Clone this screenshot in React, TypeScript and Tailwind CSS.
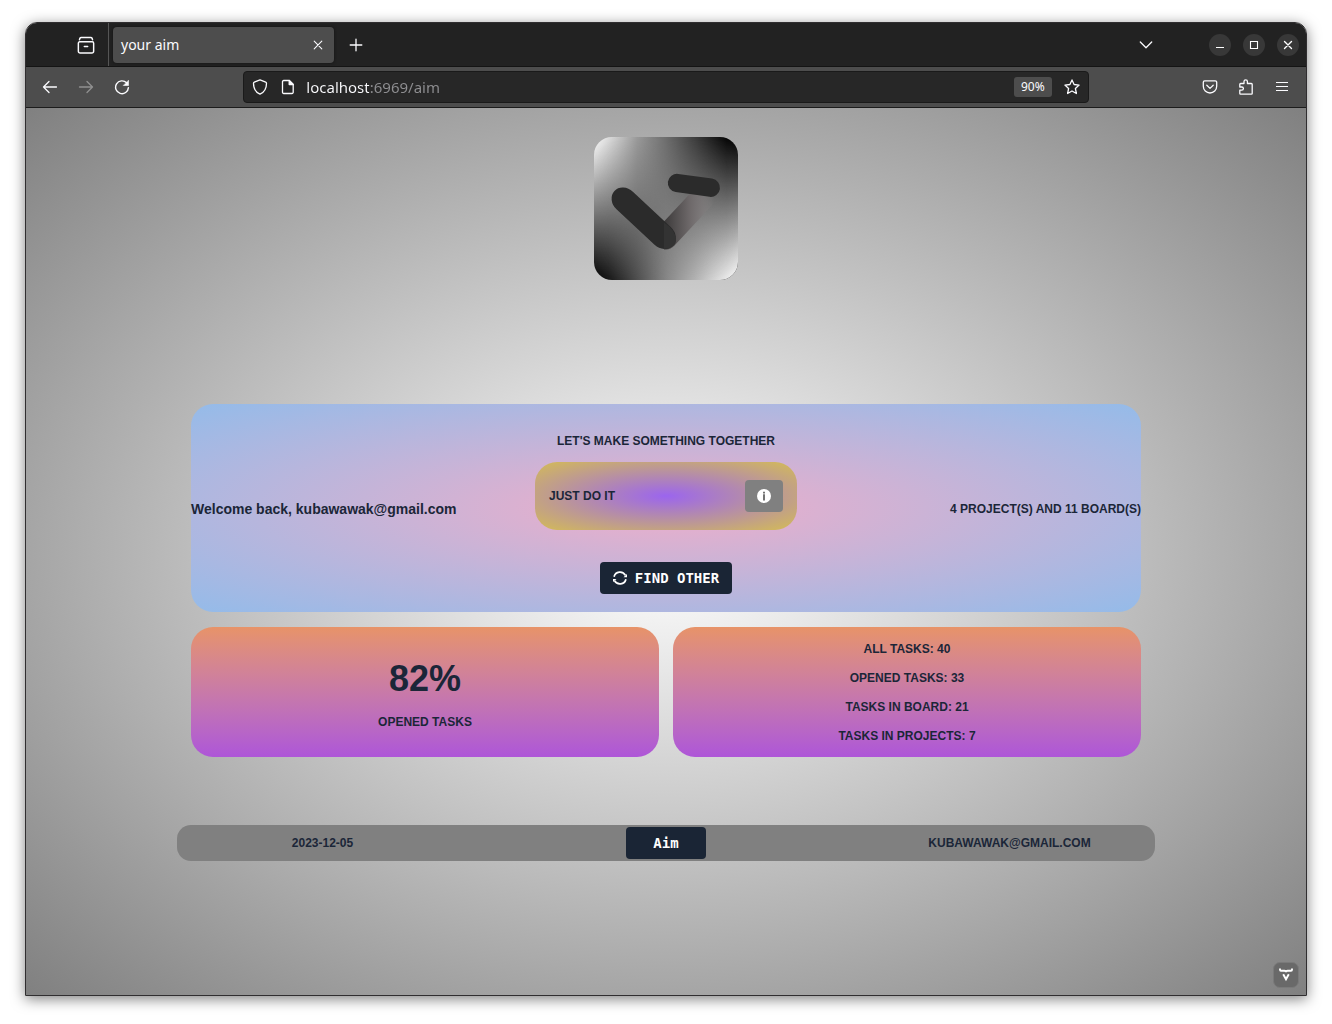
import React from "react";

type IconProps = { children: React.ReactNode; className?: string };

function Icon({ children, className = "size-4" }: IconProps) {
  return (
    <svg
      viewBox="0 0 16 16"
      className={className}
      fill="none"
      stroke="currentColor"
      strokeWidth="1.3"
      strokeLinecap="round"
      strokeLinejoin="round"
      aria-hidden="true"
    >
      {children}
    </svg>
  );
}

function ToolButton({
  label,
  children,
  disabled = false,
}: {
  label: string;
  children: React.ReactNode;
  disabled?: boolean;
}) {
  return (
    <button
      type="button"
      aria-label={label}
      disabled={disabled}
      className="flex size-9 items-center justify-center text-[#fbfbfe] disabled:text-[#909090]"
    >
      {children}
    </button>
  );
}

function WindowButton({ label, children }: { label: string; children: React.ReactNode }) {
  return (
    <button
      type="button"
      aria-label={label}
      className="flex size-[22px] items-center justify-center rounded-full bg-[#383838] text-white"
    >
      {children}
    </button>
  );
}

function TabBar() {
  return (
    <div className="flex h-11 items-center border-b border-[#141414] bg-[#222222] pr-[7px]">
      <div className="flex h-full w-[83px] items-center justify-end border-r border-[#555555] pr-1">
        <ToolButton label="Firefox View">
          <Icon className="size-[18px]">
            <path d="M3.500 1.300h9M2.200 3.300Q2.400 1.300 3.700 1.300M13.800 3.300Q13.600 1.300 12.300 1.300" />
            <path d="M2.400 5.200h11.200a1.200 1.200 0 0 1 1.200 1.200v7.200a1.500 1.500 0 0 1-1.500 1.500H2.700a1.500 1.500 0 0 1-1.500-1.500V6.400a1.200 1.200 0 0 1 1.200-1.200zM6.500 9.300h3" />
          </Icon>
        </ToolButton>
      </div>
      <div className="ml-1 flex h-9 w-[221px] items-center justify-between rounded bg-[#4d4d4d] pr-2 pl-2 shadow-[0_0_3px_#111]">
        <span className="text-[14px] text-[#fbfbfe]">your aim</span>
        <button type="button" aria-label="Close tab" className="flex size-4 items-center justify-center text-[#fbfbfe]">
          <Icon>
            <path d="M4.200 4.200l7.600 7.600M11.800 4.200l-7.600 7.600" strokeWidth="1.1" />
          </Icon>
        </button>
      </div>
      <div className="ml-1">
        <ToolButton label="New tab">
          <Icon>
            <path d="M8 2.200v11.600M2.200 8h11.600" />
          </Icon>
        </ToolButton>
      </div>
      <div className="ml-auto mr-[45px]">
        <ToolButton label="List all tabs">
          <Icon>
            <path d="M2.300 5l5.700 5.700L13.700 5" />
          </Icon>
        </ToolButton>
      </div>
      <div className="flex gap-3">
        <WindowButton label="Minimize">
          <Icon>
            <path d="M4 10.500h8" strokeLinecap="butt" strokeWidth="1" />
          </Icon>
        </WindowButton>
        <WindowButton label="Maximize">
          <Icon>
            <path d="M4.500 4.500h7v7h-7z" strokeLinejoin="miter" strokeWidth="1.100" />
          </Icon>
        </WindowButton>
        <WindowButton label="Close">
          <Icon>
            <path d="M4.500 4.500l7 7M11.500 4.500l-7 7" strokeWidth="1.400" />
          </Icon>
        </WindowButton>
      </div>
    </div>
  );
}

function NavBar() {
  return (
    <div className="flex h-[41px] items-center border-b border-[#1c1c1c] bg-[#4d4d4d] px-1.5">
      <div className="flex flex-1">
        <ToolButton label="Back">
          <Icon>
            <path d="M14.500 8H1.500M7 2.500L1.500 8 7 13.500" />
          </Icon>
        </ToolButton>
        <ToolButton label="Forward" disabled>
          <Icon>
            <path d="M1.500 8h13M9 2.500L14.500 8 9 13.500" />
          </Icon>
        </ToolButton>
        <ToolButton label="Reload">
          <Icon>
            <path d="M12.600 3.800A6.400 6.400 0 1 0 14.400 8.600" strokeWidth="1.400" />
            <path d="M14.500 1.600v4.900H9.600z" fill="currentColor" strokeWidth="0.600" />
          </Icon>
        </ToolButton>
      </div>
      <form className="flex h-8 w-2/3 items-center rounded border border-[#1a1a1a] bg-[#272727] px-2 text-[#fbfbfe]">
        <Icon>
          <path d="M8 .9l5.700 2.200c.5.200.8.600.8 1.100 0 5-2.200 9-6.500 11C3.700 13.200 1.500 9.200 1.500 4.200c0-.5.300-.9.800-1.100z" />
        </Icon>
        <Icon className="ml-3 size-4">
          <path d="M3.700 1.500h5.500l4 4v7.800a1.200 1.200 0 0 1-1.200 1.200H3.700a1.200 1.200 0 0 1-1.200-1.200V2.700a1.200 1.200 0 0 1 1.200-1.200z" />
          <path d="M9.200 1.500v4h4z" fill="currentColor" />
        </Icon>
        <input
          type="text"
          aria-label="Address"
          defaultValue="localhost:6969/aim"
          className="ml-2.5 min-w-0 flex-1 bg-[linear-gradient(to_right,#fbfbfe_63px,#8f8f92_63px)] bg-clip-text text-[15px] text-transparent caret-white outline-none"
        />
        <button type="button" className="h-5 rounded-[3px] bg-[#4d4d4d] px-[7px] text-[12px]">
          90%
        </button>
        <button type="button" aria-label="Bookmark this page" className="ml-3">
          <Icon>
            <path d="M8 .9l2.100 4.600 5 .6-3.700 3.400 1 5L8 12l-4.400 2.500 1-5L.9 6.100l5-.6z" />
          </Icon>
        </button>
      </form>
      <div className="flex flex-1 justify-end">
        <ToolButton label="Save to Pocket">
          <Icon>
            <path d="M2.700 1.900h10.600a1.400 1.400 0 0 1 1.400 1.400v4a6.700 6.700 0 0 1-13.400 0v-4a1.400 1.400 0 0 1 1.400-1.400zM4.800 6.300L8 9.400l3.200-3.100" />
          </Icon>
        </ToolButton>
        <ToolButton label="Extensions">
          <Icon>
            <path d="M6 4.500V2.600a1.700 1.700 0 0 1 3.400 0v1.900h3.900a.9.900 0 0 1 .9.900v9a.7.700 0 0 1-.7.700H2.500a.7.700 0 0 1-.7-.7v-3.200h2a1.600 1.600 0 0 0 0-3.200h-2V5.400a.9.900 0 0 1 .9-.9z" />
          </Icon>
        </ToolButton>
        <ToolButton label="Open application menu">
          <Icon>
            <path d="M2 3.500h12M2 7.500h12M2 11.500h12" strokeLinecap="butt" strokeWidth="1.200" />
          </Icon>
        </ToolButton>
      </div>
    </div>
  );
}

function Logo() {
  return (
    <svg viewBox="0 0 144 143" className="h-[143px] w-36 rounded-[18px]" role="img" aria-label="Aim logo">
      <defs>
        <linearGradient id="row-top">
          <stop offset="0" stopColor="#ffffff" />
          <stop offset="0.15" stopColor="#cccccc" />
          <stop offset="0.3" stopColor="#9a9a9a" />
          <stop offset="0.5" stopColor="#6e6e6e" />
          <stop offset="0.7" stopColor="#3e3e3e" />
          <stop offset="0.92" stopColor="#060606" />
          <stop offset="1" stopColor="#000000" />
        </linearGradient>
        <linearGradient id="row-bottom">
          <stop offset="0" stopColor="#000000" />
          <stop offset="0.1" stopColor="#161616" />
          <stop offset="0.5" stopColor="#868686" />
          <stop offset="0.7" stopColor="#b2b2b2" />
          <stop offset="1" stopColor="#ffffff" />
        </linearGradient>
        <linearGradient id="fade" x1="0" y1="0" x2="0" y2="1">
          <stop offset="0" stopColor="#ffffff" stopOpacity="0" />
          <stop offset="1" stopColor="#ffffff" />
        </linearGradient>
        <mask id="fade-mask">
          <rect width="144" height="143" fill="url(#fade)" />
        </mask>
        <linearGradient id="arm" gradientUnits="userSpaceOnUse" x1="70" y1="0" x2="120" y2="0">
          <stop offset="0" stopColor="#3c3a3a" />
          <stop offset="0.5" stopColor="#6c6768" />
          <stop offset="0.75" stopColor="#7c7778" stopOpacity="0.7" />
          <stop offset="1" stopColor="#8c8888" stopOpacity="0" />
        </linearGradient>
        <clipPath id="right-half">
          <rect x="70" width="74" height="143" />
        </clipPath>
      </defs>
      <rect width="144" height="143" fill="url(#row-top)" />
      <rect width="144" height="143" fill="url(#row-bottom)" mask="url(#fade-mask)" />
      <path
        d="M71.500 100.500L114 55"
        stroke="url(#arm)"
        strokeWidth="24"
        strokeLinecap="round"
        clipPath="url(#right-half)"
      />
      <rect x="-40" y="-12" width="80" height="24" rx="14" ry="12" fill="#2b2b2b" transform="translate(49.700 81.300) rotate(43)" />
      <path d="M70 85.500q12 8 12 17.500 0 4-3 6-4 3-9 3z" fill="#333333" />
      <path d="M83 46l33.800 4.700" stroke="#2b2b2b" strokeWidth="18.400" strokeLinecap="round" />
    </svg>
  );
}

function Hero() {
  return (
    <section className="grid w-full grid-cols-[1fr_262px_1fr] items-center rounded-[22px] bg-[radial-gradient(ellipse_at_center,#eeaeca_0%,#94bbe9_100%)]">
      <h4 className="pt-0.5 text-[14px] font-bold">Welcome back, kubawawak@gmail.com</h4>
      <div className="flex flex-col items-center pt-[29px] pb-[18px]">
        <h6 className="text-[12px] leading-4 font-bold whitespace-nowrap">LET'S MAKE SOMETHING TOGETHER</h6>
        <div className="mt-[13px] flex h-[68px] w-full items-center justify-between rounded-[22px] bg-[radial-gradient(ellipse_at_center,#9b65ee_0%,#d4bc55_100%)] px-3.5">
          <h6 className="text-[12px] font-bold">JUST DO IT</h6>
          <button
            type="button"
            aria-label="Details"
            className="flex h-8 w-[38px] items-center justify-center rounded bg-[#808080] text-white"
          >
            <svg viewBox="0 0 16 16" className="size-3.5" aria-hidden="true">
              <circle cx="8" cy="8" r="8" fill="currentColor" />
              <path d="M7 3h2v2H7zM7 6h2v7H7z" fill="#606060" />
            </svg>
          </button>
        </div>
        <button
          type="button"
          className="mt-8 flex h-8 w-[132px] items-center justify-center gap-2 rounded bg-[#1a2535] font-['DejaVu_Sans_Mono',monospace] text-[14px] font-bold whitespace-nowrap text-white"
        >
          <svg viewBox="0 0 16 16" className="size-3.5 shrink-0" fill="none" stroke="currentColor" strokeWidth="2" aria-hidden="true">
            <path d="M1.200 6.500A7 7 0 0 1 14.200 5M14.800 9.500A7 7 0 0 1 1.800 11" />
            <path d="M16 3.500V7h-4zM0 12.500V9h4z" fill="currentColor" stroke="none" />
          </svg>
          FIND OTHER
        </button>
      </div>
      <h6 className="pt-0.5 text-right text-[12px] font-bold">4 PROJECT(S) AND 11 BOARD(S)</h6>
    </section>
  );
}

const TASK_COUNTS = ["ALL TASKS: 40", "OPENED TASKS: 33", "TASKS IN BOARD: 21", "TASKS IN PROJECTS: 7"];

function Stats() {
  return (
    <section className="mt-[15px] grid w-full grid-cols-2 gap-3.5">
      <div className="flex h-[130px] flex-col items-center justify-center rounded-[22px] bg-linear-to-b from-[#e79368] to-[#ae55d8] pt-[5px]">
        <h1 className="text-[36px] leading-10 font-bold">82%</h1>
        <h6 className="mt-[15px] text-[12px] leading-4 font-bold">OPENED TASKS</h6>
      </div>
      <div className="flex h-[130px] flex-col items-center justify-center gap-[13px] rounded-[22px] bg-linear-to-b from-[#e79368] to-[#ae55d8]">
        {TASK_COUNTS.map((line) => (
          <h6 key={line} className="text-[12px] leading-4 font-bold">
            {line}
          </h6>
        ))}
      </div>
    </section>
  );
}

function Footer() {
  return (
    <footer className="mt-[68px] grid h-9 w-[978px] max-w-full grid-cols-[1fr_auto_1fr] items-center rounded-[14px] bg-[#808080]">
      <h6 className="pr-[158px] text-center text-[12px] font-bold">2023-12-05</h6>
      <button
        type="button"
        className="h-8 w-20 rounded bg-[#1a2535] font-['DejaVu_Sans_Mono',monospace] text-[14px] font-bold text-white"
      >
        Aim
      </button>
      <h6 className="pl-[158px] text-center text-[12px] font-bold">KUBAWAWAK@GMAIL.COM</h6>
    </footer>
  );
}

export default function App() {
  return (
    <div className="flex min-h-screen flex-col bg-white px-[25px] pt-[22px] pb-7 font-['Noto_Sans',sans-serif]">
      <div className="flex flex-1 flex-col overflow-hidden rounded-t-xl border border-[#302e30] shadow-[0_3px_14px_rgba(0,0,0,0.5)]">
        <TabBar />
        <NavBar />
        <main className="relative flex flex-1 flex-col items-center bg-[radial-gradient(ellipse_at_center,#ffffff_0%,#808080_100%)] px-6 pt-[29px] pb-24 font-['Liberation_Sans',Arial,sans-serif] text-[#1b2638]">
          <Logo />
          <div className="mt-31 flex w-[950px] max-w-full flex-col">
            <Hero />
            <Stats />
          </div>
          <Footer />
          <button
            type="button"
            aria-label="Vaadin development tools"
            className="absolute right-[7px] bottom-[7px] flex size-[26px] items-center justify-center rounded-[7px] border border-[#7a7a7a] bg-[#696969] text-white"
          >
            <svg viewBox="0 0 14 14" className="size-3.5" fill="none" stroke="currentColor" strokeWidth="1.900" aria-hidden="true">
              <path d="M1 .5v1.200q0 1 1 1h3.500Q7 2.700 7 4.200q0-1.500 1.500-1.500H12q1 0 1-1V.5M4.200 6.200L7 11.300l2.800-5.100" />
            </svg>
          </button>
        </main>
      </div>
    </div>
  );
}
